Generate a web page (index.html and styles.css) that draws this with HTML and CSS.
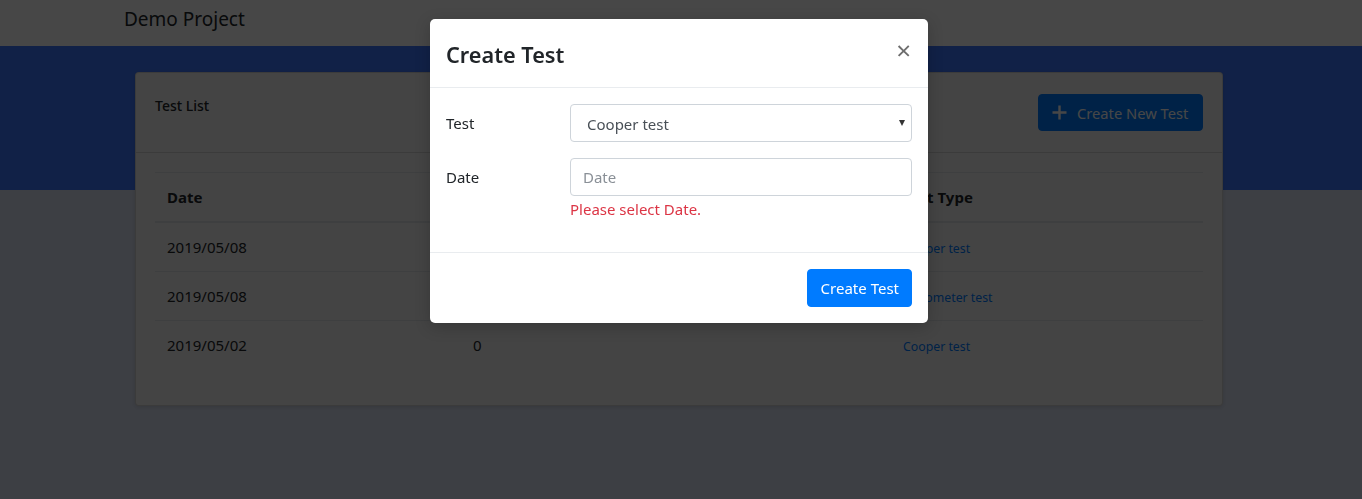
FILE: index.html
```html
<!DOCTYPE html>
<html lang="en">
<head>
<meta charset="utf-8">
<title>Demo Project</title>
<link rel="stylesheet" href="styles.css">
</head>
<body>
<nav class="navbar"><span class="brand">Demo Project</span></nav>
<main class="page">
  <section class="card">
    <header class="card-header">
      <h6 class="card-title">Test List</h6>
      <button class="btn btn-primary btn-new" type="button">
        <svg class="plus" width="15" height="15" viewBox="0 0 15 15" aria-hidden="true"><path d="M7.5 0.5v14M0.5 7.5h14" stroke="currentColor" stroke-width="2.4" fill="none"/></svg>
        <span>Create New Test</span>
      </button>
    </header>
    <div class="card-body">
      <table class="table">
        <colgroup><col class="c1"><col class="c2"><col class="c3"></colgroup>
        <thead>
          <tr><th>Date</th><th>Result</th><th>Test Type</th></tr>
        </thead>
        <tbody>
          <tr><td>2019/05/08</td><td>0</td><td class="type"><a href="#">Cooper test</a></td></tr>
          <tr><td>2019/05/08</td><td>0</td><td class="type"><a href="#">Spirometer test</a></td></tr>
          <tr><td>2019/05/02</td><td>0</td><td class="type"><a href="#">Cooper test</a></td></tr>
        </tbody>
      </table>
    </div>
  </section>
</main>

<div class="backdrop"></div>
<div class="modal" role="dialog">
  <div class="modal-header">
    <h4 class="modal-title">Create Test</h4>
    <button class="close" type="button" aria-label="Close">&times;</button>
  </div>
  <div class="modal-body">
    <div class="form-row">
      <label class="form-label">Test</label>
      <div class="form-field">
        <div class="select-wrap">
          <select class="form-control select">
            <option>Cooper test</option>
          </select>
        </div>
      </div>
    </div>
    <div class="form-row">
      <label class="form-label">Date</label>
      <div class="form-field">
        <input class="form-control" type="text" placeholder="Date">
        <div class="invalid">Please select Date.</div>
      </div>
    </div>
  </div>
  <div class="modal-footer">
    <button class="btn btn-primary btn-create" type="button">Create Test</button>
  </div>
</div>
</body>
</html>
```

FILE: styles.css
```css
* { box-sizing: border-box; }
html, body { margin: 0; }
body {
  font-family: "Noto Sans", "Open Sans", sans-serif;
  font-size: 15px;
  line-height: 24px;
  color: #212529;
  background: #dae1f3;
  height: 499px;
  overflow: hidden;
}

.navbar {
  height: 46px;
  padding: 4px 0 0 124px;
  background: #ffffff;
}
.brand {
  font-size: 19px;
  line-height: 30px;
  color: #212529;
}

.page {
  padding: 26px 0 0 135px;
  background: linear-gradient(#3f78fd 0, #3f78fd 144px, #dae1f3 144px);
  height: 453px;
}

.card {
  width: 1088px;
  background: #f4f4f4;
  border: 1px solid rgba(0,0,0,.125);
  border-radius: 4px;
  box-shadow: 0 1px 4px rgba(0,0,0,.12);
}
.card-header {
  height: 80px;
  padding: 21px 19px 0 19px;
  border-bottom: 1px solid rgba(0,0,0,.125);
  display: flex;
  justify-content: space-between;
  align-items: flex-start;
}
.card-title {
  margin: 0;
  font-size: 14px;
  font-weight: 500;
  line-height: 24px;
}
.card-body {
  padding: 19px 19px 20px 19px;
}

.btn {
  font-family: inherit;
  border: 1px solid transparent;
  border-radius: 4px;
  cursor: pointer;
}
.btn-primary {
  background: #007bff;
  color: #fff;
  border-color: #007bff;
}
.btn-new {
  height: 37px;
  width: 165px;
  display: flex;
  align-items: center;
  gap: 10px;
  padding: 0 12px 0 13px;
  font-size: 14.7px;
}
.plus { flex: none; }

.table {
  width: 100%;
  border-collapse: collapse;
  margin-bottom: 16px;
}
.c1 { width: 306px; }
.c2 { width: 430px; }
.table th, .table td {
  text-align: left;
  padding: 12px;
  border-top: 1px solid #dee2e6;
  line-height: 24px;
  vertical-align: middle;
}
.table th { font-weight: 700; }
.table thead th { border-bottom: 2px solid #dee2e6; }
.table td.type {
  font-size: 12.3px;
  padding: 14px 12px 10px;
}
.table a {
  color: #007bff;
  text-decoration: none;
}

.backdrop {
  position: fixed;
  inset: 0;
  background: rgba(0,0,0,.72);
}

.modal {
  position: absolute;
  top: 19px;
  left: 430px;
  width: 498px;
  background: #fff;
  border-radius: 5px;
  box-shadow: 0 4px 16px rgba(0,0,0,.2);
}
.modal-header {
  height: 69px;
  padding: 16px;
  display: flex;
  justify-content: space-between;
  align-items: center;
  border-bottom: 1px solid #e9ecef;
}
.modal-title {
  margin: 0;
  padding-top: 3px;
  font-size: 21.7px;
  font-weight: 600;
  line-height: 36px;
  color: #212529;
}
.close {
  border: 0;
  background: none;
  padding: 0;
  margin: -6px 1px 0 0;
  font-family: inherit;
  font-size: 26px;
  font-weight: 400;
  line-height: 1;
  color: #6e6e6e;
}
.modal-body {
  padding: 16px;
  height: 164px;
}
.form-row {
  display: flex;
  margin-bottom: 16px;
}
.form-label {
  width: 124px;
  flex: none;
  padding-top: 7px;
  line-height: 24px;
}
.form-field { flex: 1; }
.form-control {
  display: block;
  width: 100%;
  height: 38px;
  padding: 6px 12px;
  font-family: inherit;
  font-size: 15px;
  color: #495057;
  background: #fff;
  border: 1px solid #ced4da;
  border-radius: 4px;
  outline: none;
}
.form-control::placeholder { color: #8a9097; }
.select-wrap { position: relative; }
.select {
  appearance: none;
  -webkit-appearance: none;
  padding: 7px 12px 5px 16px;
  color: #495057;
}
.select-wrap::after {
  content: "";
  position: absolute;
  right: 7px;
  top: 16px;
  border-left: 3.5px solid transparent;
  border-right: 3.5px solid transparent;
  border-top: 6px solid #333;
  pointer-events: none;
}
.invalid {
  margin-top: 2px;
  font-size: 15px;
  line-height: 22px;
  color: #dc3545;
}
.modal-footer {
  height: 71px;
  border-top: 1px solid #e9ecef;
  padding: 16px;
  display: flex;
  justify-content: flex-end;
  align-items: center;
}
.btn-create {
  height: 38px;
  padding: 0 12px 0 13px;
  font-size: 15px;
}
```
